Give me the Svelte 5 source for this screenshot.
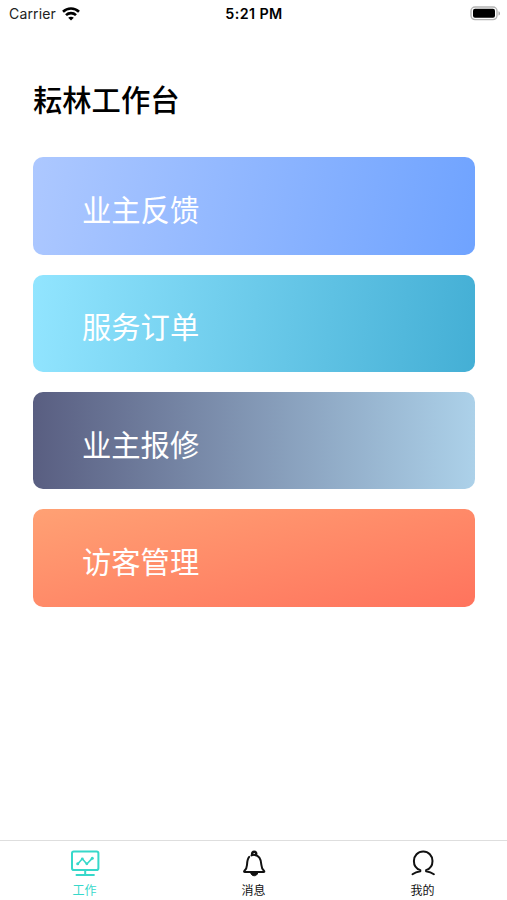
<script>
  const entries = [
    { id: 'feedback', label: '业主反馈' },
    { id: 'order', label: '服务订单' },
    { id: 'repair', label: '业主报修' },
    { id: 'visitor', label: '访客管理' },
  ];

  const tabs = [
    { id: 'work', label: '工作' },
    { id: 'message', label: '消息' },
    { id: 'mine', label: '我的' },
  ];

  let activeTab = $state('work');
</script>

<div class="screen">
  <header class="status-bar">
    <div class="carrier">
      <span>Carrier</span>
      <svg width="18" height="14" viewBox="0 0 18 14" fill="none" stroke="#000" stroke-width="2.6">
        <path d="M1 4.7C5.4.5 12.6.5 17 4.7" />
        <path d="M4 8.1c2.8-2.7 7.2-2.7 10 0" />
        <path d="M9 13.6 6.2 10.8c1.5-1.5 4.1-1.5 5.6 0z" fill="#000" stroke="none" />
      </svg>
    </div>
    <time>5:21 PM</time>
    <div class="battery">
      <svg width="31" height="15" viewBox="0 0 31 15">
        <rect x="1" y="1" width="26" height="12.6" rx="4" fill="#fff" stroke="#b4b4b4" stroke-width="1.4" />
        <rect x="3" y="2.8" width="22" height="9" rx="2" fill="#000" />
        <path d="M28.5 5.2c2 .7 2 3.7 0 4.4z" fill="#a8a8a8" />
      </svg>
    </div>
  </header>

  <main>
    <h1>耘林工作台</h1>
    <div class="entries">
      {#each entries as entry (entry.id)}
        <button class="entry {entry.id}">{entry.label}</button>
      {/each}
    </div>
  </main>

  <nav class="tab-bar">
    {#each tabs as tab (tab.id)}
      <button class="tab" class:active={activeTab === tab.id} onclick={() => (activeTab = tab.id)}>
        <svg width="30" height="30" viewBox="0 0 30 30" fill="none" stroke="currentColor" stroke-width="2" stroke-linecap="round" stroke-linejoin="round">
          {#if tab.id === 'work'}
            <rect x="2" y="2.4" width="26.4" height="18.6" rx="1.8" />
            <path d="M15.2 21.5v4M6.5 26h17.4" />
            <path d="m7.7 15 4.6-5.2 4.5 5.2 5.4-5.6" stroke-width="1.6" />
            <g fill="currentColor" stroke="none">
              <circle cx="7.7" cy="14.8" r="1.5" />
              <circle cx="12.3" cy="9.9" r="1.4" />
              <circle cx="16.8" cy="14.8" r="1.4" />
              <circle cx="22.3" cy="9.3" r="1.5" />
            </g>
          {:else if tab.id === 'message'}
            <path d="M10.2 7.9C8.4 10 8.1 13 8 16c-.1 3-1.2 4.5-2.7 6-.4.6-.2 1 .5 1h18.8c.7 0 .9-.4.5-1-1.5-1.5-2.6-3-2.7-6-.2-5.4-1.3-9.6-6.8-10.1-1.2-.1-2.2.1-3.1.5" />
            <path d="M13.3 5.4a2 2 0 1 1 3.8 0" stroke-width="2.5" />
            <path d="M11.6 23.6h7.2c-.6 4.3-6.6 4.3-7.2 0z" fill="currentColor" stroke-width="1" />
          {:else}
            <path d="M4.5 25.3c2.3-1.6 4.8-2.5 7.8-3v-1.2C8.4 19.8 5.9 16.4 5.9 12c0-5.3 4-9.5 9.3-9.5s9.3 4.2 9.3 9.5c0 4.4-2.5 7.8-6.4 9.1v1.2c3 .5 5.5 1.4 7.8 3" />
          {/if}
        </svg>
        <span>{tab.label}</span>
      </button>
    {/each}
  </nav>
</div>

<style>
  :global(body) {
    background: #fff;
  }

  .screen {
    display: flex;
    flex-direction: column;
    height: 100vh;
    color: #000;
    font-family: Inter, "Noto Sans CJK SC", sans-serif;
  }

  .status-bar {
    display: grid;
    grid-template-columns: 1fr auto 1fr;
    align-items: center;
    height: 27px;
    padding: 0 6px 0 9px;
    font-size: 14px;
    line-height: 20px;
    box-sizing: border-box;
  }

  .carrier {
    display: flex;
    align-items: center;
    gap: 6px;
    color: #222;
    letter-spacing: 0.15px;
  }

  .status-bar time {
    padding-right: 2px;
    font-size: 14.3px;
    font-weight: 600;
    letter-spacing: 0.4px;
  }

  .battery {
    display: flex;
    justify-content: flex-end;
  }

  main {
    flex: 1;
    padding: 53px 32px 0 33px;
  }

  h1 {
    margin: 0;
    font-size: 29.3px;
    line-height: 42px;
    font-weight: 500;
  }

  .entries {
    display: flex;
    flex-direction: column;
    gap: 19.7px;
    margin-top: 35.3px;
  }

  .entry {
    height: 97.6px;
    padding: 4px 0 0 49px;
    border: 0;
    border-radius: 10px;
    color: #fff;
    font-family: inherit;
    font-size: 29.3px;
    font-weight: 400;
    text-align: left;
  }

  .feedback { background: linear-gradient(100deg, #adc8ff, #6fa3ff); }
  .order { background: linear-gradient(96deg, #92e5ff, #44afd5); }
  .repair { background: linear-gradient(90deg, #595e81, #acd1e9); }
  .visitor { background: linear-gradient(167deg, #ffa174, #ff735d); }

  .tab-bar {
    display: flex;
    height: 60px;
    border-top: 1px solid #dedede;
    box-sizing: border-box;
  }

  .tab {
    flex: 1;
    display: flex;
    flex-direction: column;
    align-items: center;
    padding: 8px 0 0;
    border: 0;
    background: none;
    color: #111;
    font-family: inherit;
    font-size: 12px;
    line-height: 16px;
  }

  .tab svg {
    flex: none;
  }

  .tab span {
    margin-top: 4px;
  }

  .tab.active {
    color: #37d8ca;
  }
</style>
